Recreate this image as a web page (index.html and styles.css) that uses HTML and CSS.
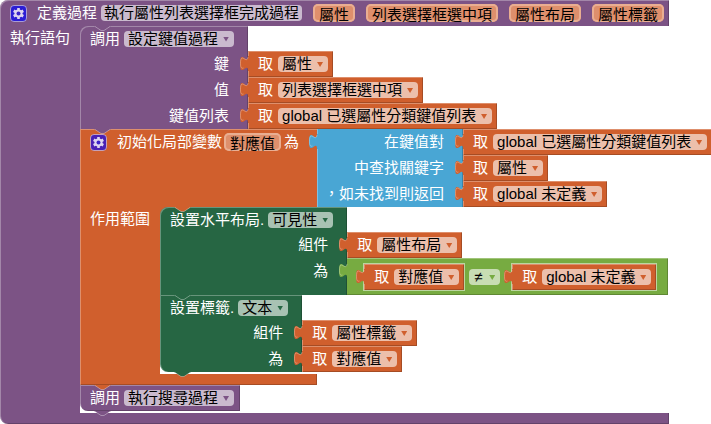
FILE: index.html
```html
<!DOCTYPE html>
<html lang="zh-Hant">
<head>
<meta charset="utf-8">
<title>執行屬性列表選擇框完成過程</title>
<link rel="stylesheet" href="styles.css">
</head>
<body>
<svg class="defs" aria-hidden="true">
  <symbol id="tab" viewBox="0 0 9 20">
    <path d="M9 5H8c0 10-8-8-8 7.5s8-2.5 8 7.5h1z" fill="currentColor"/>
    <path d="M8 6c-1 8-7.500-6-7.500 6.500 0 5 1.500 5 3 4.500" fill="none" stroke="#fff" stroke-opacity=".3"/>
  </symbol>
  <symbol id="nub" viewBox="0 0 17 6">
    <path d="M0 0h17l-1 .5-6 4H7l-6-4z" fill="currentColor"/>
    <path d="M1 .5l6 4h3l6-4" fill="none" stroke="#fff" stroke-opacity=".35"/>
  </symbol>
  <symbol id="gear" viewBox="0 0 17 17">
    <rect x=".5" y=".5" width="16" height="16" rx="3.500" fill="#00f" fill-opacity=".65" stroke="#fff" stroke-opacity=".5"/>
    <path d="M8.500 3v11M3.700 5.750l9.600 5.500M13.300 5.750l-9.600 5.500" stroke="#ded5f0" stroke-width="2.600"/>
    <circle cx="8.500" cy="8.500" r="4" fill="#ded5f0"/>
    <circle cx="8.500" cy="8.500" r="2" fill="#3b24c8"/>
  </symbol>
</svg>

<main class="procedure purple">
  <header class="procedure-head">
    <button class="gear" type="button" aria-label="參數"><svg><use href="#gear"/></svg></button>
    <label class="define" for="proc-name">定義過程</label>
    <input class="name" id="proc-name" value="執行屬性列表選擇框完成過程">
    <input class="param" aria-label="參數一" value="屬性">
    <input class="param" aria-label="參數二" value="列表選擇框選中項">
    <input class="param" aria-label="參數三" value="屬性布局">
    <input class="param" aria-label="參數四" value="屬性標籤">
  </header>

  <section class="branch">
    <div class="branch-label">執行語句</div>
    <div class="stack">
      <svg class="nub nub-top"><use href="#nub"/></svg>

      <div class="block inputs purple first">
        <label class="title">調用<span class="pick"><select><option>設定鍵值過程</option></select></span></label>
        <div class="input">鍵</div>
        <label class="value orange"><svg class="tab"><use href="#tab"/></svg>取<span class="pick"><select><option>屬性</option></select></span></label>
        <div class="input">值</div>
        <label class="value orange"><svg class="tab"><use href="#tab"/></svg>取<span class="pick"><select><option>列表選擇框選中項</option></select></span></label>
        <div class="input">鍵值列表</div>
        <label class="value orange"><svg class="tab"><use href="#tab"/></svg>取<span class="pick"><select><option>global 已選屬性分類鍵值列表</option></select></span></label>
        <svg class="nub"><use href="#nub"/></svg>
      </div>

      <div class="block local orange">
        <div class="local-head">
          <button class="gear" type="button" aria-label="變數"><svg><use href="#gear"/></svg></button>
          <label class="variable">初始化局部變數<input class="param" value="對應值"></label>
          <span>為</span>
        </div>
        <div class="inputs lookup blue">
          <svg class="tab"><use href="#tab"/></svg>
          <div class="input">在鍵值對</div>
          <label class="value orange"><svg class="tab"><use href="#tab"/></svg>取<span class="pick"><select><option>global 已選屬性分類鍵值列表</option></select></span></label>
          <div class="input">中查找關鍵字</div>
          <label class="value orange"><svg class="tab"><use href="#tab"/></svg>取<span class="pick"><select><option>屬性</option></select></span></label>
          <div class="input">，如未找到則返回</div>
          <label class="value orange"><svg class="tab"><use href="#tab"/></svg>取<span class="pick"><select><option>global 未定義</option></select></span></label>
        </div>

        <section class="branch">
          <div class="branch-label">作用範圍</div>
          <div class="stack">
            <svg class="nub nub-top"><use href="#nub"/></svg>

            <div class="block inputs forest first">
              <label class="title">設置水平布局.<span class="pick"><select><option>可見性</option></select></span></label>
              <div class="input">組件</div>
              <label class="value orange"><svg class="tab"><use href="#tab"/></svg>取<span class="pick"><select><option>屬性布局</option></select></span></label>
              <div class="input">為</div>
              <div class="compare green">
                <svg class="tab"><use href="#tab"/></svg>
                <label class="value orange inset"><svg class="tab"><use href="#tab"/></svg>取<span class="pick"><select><option>對應值</option></select></span></label>
                <span class="pick"><select aria-label="比較"><option>≠</option></select></span>
                <label class="value orange inset right"><svg class="tab"><use href="#tab"/></svg>取<span class="pick"><select><option>global 未定義</option></select></span></label>
              </div>
              <svg class="nub"><use href="#nub"/></svg>
            </div>

            <div class="block inputs forest last">
              <label class="title">設置標籤.<span class="pick"><select><option>文本</option></select></span></label>
              <div class="input">組件</div>
              <label class="value orange"><svg class="tab"><use href="#tab"/></svg>取<span class="pick"><select><option>屬性標籤</option></select></span></label>
              <div class="input">為</div>
              <label class="value orange"><svg class="tab"><use href="#tab"/></svg>取<span class="pick"><select><option>對應值</option></select></span></label>
              <svg class="nub"><use href="#nub"/></svg>
            </div>
          </div>
        </section>
        <div class="foot"></div>
        <svg class="nub"><use href="#nub"/></svg>
      </div>

      <div class="block call purple last">
        <label class="title">調用<span class="pick"><select><option>執行搜尋過程</option></select></span></label>
        <svg class="nub"><use href="#nub"/></svg>
      </div>
    </div>
  </section>
  <div class="foot"></div>
</main>
</body>
</html>
```
FILE: styles.css
```css
* { box-sizing: border-box; }

body {
  margin: 0;
  background: #fff;
  font: 15px/16px "Liberation Sans", "Noto Sans CJK TC", sans-serif;
  color: #fff;
  white-space: nowrap;
}

.defs { position: absolute; width: 0; height: 0; }

/* block colours */
.purple { --c: #7c5385; }
.orange { --c: #d05f2d; }
.blue { --c: #49a6d4; }
.forest { --c: #266643; }
.green { --c: #77ab41; }

.procedure-head, .foot, .title, .input, .value, .local-head, .compare, .branch-label {
  background: var(--c);
}

/* procedure and local-variable frames: head and foot share the first column */
.procedure, .local {
  display: grid;
  grid-template-columns: max-content 1fr;
}

.procedure-head {
  display: flex;
  align-items: center;
  height: 26px;
  padding: 0 5px 0 10px;
  border-radius: 8px 0 0 0;
  box-shadow: inset 1px 1px #ffffff4d, inset -1px 0 #0003;
}
.define { margin: 0 4px 0 10px; }
.procedure-head .param { margin-left: 11px; }

.branch { grid-column: 1 / -1; display: flex; }
.branch-label {
  padding: 4px 10px;
  box-shadow: inset 1px 0 #ffffff4d;
}
.stack {
  position: relative;
  flex: 1;
  padding-bottom: 2px;
  background: linear-gradient(var(--c), var(--c)) 0 0 / 8px 8px no-repeat;
}
.foot {
  grid-column: 1;
  height: 11px;
  box-shadow: inset 1px 0 #ffffff4d, inset -1px -1px #0003;
}
.procedure > .foot { border-radius: 0 0 0 8px; }

/* blocks */
.block { position: relative; }
.inputs {
  display: grid;
  grid-template-columns: max-content max-content;
  justify-items: start;
}
.title {
  display: flex;
  align-items: center;
  gap: 4px;
  height: 25px;
  padding: 0 14px 0 10px;
  box-shadow: inset 1px 1px #ffffff4d, inset -1px 0 #0003;
}
.inputs > .title { grid-column: 1; justify-self: stretch; }
.call .title {
  width: max-content;
  height: 26px;
  padding-right: 6px;
  box-shadow: inset 1px 1px #ffffff4d, inset -1px -1px #0003;
}
.input {
  grid-column: 1;
  justify-self: stretch;
  min-height: 26px;
  padding: 5px 19px 5px 7px;
  text-align: right;
  box-shadow: inset 1px 0 #ffffff4d, inset -1px 0 #0003;
}
.first > .title { border-radius: 8px 0 0 0; }
.last > .input:nth-last-of-type(1), .call > .title { border-radius: 0 0 0 8px; }

.value {
  position: relative;
  grid-column: 2;
  display: flex;
  align-items: center;
  gap: 5px;
  height: 26px;
  padding: 0 5px 0 10px;
  box-shadow: inset 1px 1px #ffffff4d, inset -1px -1px #0003;
}
.inset { outline: 1px solid #ffffff80; outline-offset: 0; }

.compare {
  position: relative;
  grid-column: 2;
  display: flex;
  align-items: center;
  gap: 5px;
  padding: 6px 12px 5px 17px;
  box-shadow: inset 0 1px #ffffff4d, inset -1px -1px #0003;
}
.compare > .pick select { padding: 0 17px 0 5px; }
.compare .right { margin-left: 7px; }

.local-head {
  display: flex;
  align-items: flex-start;
  padding: 5px 18px 5px 10px;
  box-shadow: inset 1px 1px #ffffff4d;
}
.variable { display: flex; align-items: flex-start; gap: 2px; margin: 0 3px 0 10px; }
.variable .param { margin-top: -1px; }
.lookup { position: relative; }

/* connectors laid over neighbouring blocks */
.tab {
  position: absolute;
  z-index: 2;
  top: 0;
  left: -8px;
  width: 9px;
  height: 20px;
  color: var(--c);
}
.nub {
  position: absolute;
  z-index: 3;
  top: 100%;
  left: 14px;
  width: 17px;
  height: 6px;
  color: var(--c);
}
.nub-top { top: 0; }

/* fields */
select, input {
  font: inherit;
  color: #000;
  border: 0;
  margin: 0;
  outline: 0;
}
.pick { position: relative; display: flex; color: var(--c); }
.pick::after {
  content: "";
  position: absolute;
  top: 6px;
  right: 5px;
  width: 6px;
  height: 5px;
  background: var(--c);
  clip-path: polygon(0 0, 100% 0, 50% 100%);
  pointer-events: none;
}
select {
  appearance: none;
  height: 16px;
  padding: 0 15px 0 4px;
  border-radius: 4px;
  background: #fff9;
}
input { field-sizing: content; height: 16px; border-radius: 4px; }
.name { padding: 0 3px; background: #fff9; }
.param {
  height: 18px;
  padding: 0 6px;
  border-radius: 5px;
  background: #de8f6c;
  box-shadow: inset 0 0 0 2px #e9ae92;
}
.gear {
  width: 17px;
  height: 17px;
  padding: 0;
  border: 0;
  background: none;
}
.gear svg { display: block; width: 17px; height: 17px; }
```
